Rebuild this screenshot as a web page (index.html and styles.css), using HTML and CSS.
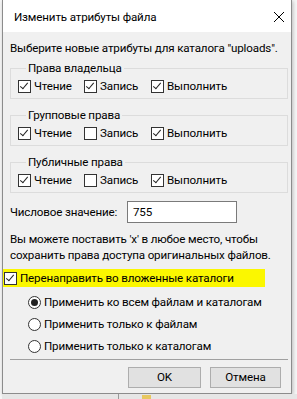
FILE: index.html
```html
<!DOCTYPE html>
<html lang="ru">
<head>
    <meta charset="UTF-8">
    <title>Изменить атрибуты файла</title>
    <link rel="stylesheet" href="styles.css">
</head>
<body>

    <div class="desk">
        <div class="dialog">
            <div class="titlebar">
                <span class="title">Изменить атрибуты файла</span>
                <svg class="close" width="12" height="12" viewBox="0 0 12 12">
                    <path d="M1 1 L11 11 M11 1 L1 11" stroke="#000" stroke-width="1" fill="none"/>
                </svg>
            </div>

            <div class="content">
                <p class="intro">Выберите новые атрибуты для каталога "uploads".</p>

                <fieldset class="group">
                    <legend>Права владельца</legend>
                    <div class="row">
                        <span class="check on"></span><span class="lbl w1">Чтение</span>
                        <span class="check on"></span><span class="lbl w2">Запись</span>
                        <span class="check on"></span><span class="lbl">Выполнить</span>
                    </div>
                </fieldset>

                <fieldset class="group">
                    <legend>Групповые права</legend>
                    <div class="row">
                        <span class="check on"></span><span class="lbl w1">Чтение</span>
                        <span class="check"></span><span class="lbl w2">Запись</span>
                        <span class="check on"></span><span class="lbl">Выполнить</span>
                    </div>
                </fieldset>

                <fieldset class="group">
                    <legend>Публичные права</legend>
                    <div class="row">
                        <span class="check on"></span><span class="lbl w1">Чтение</span>
                        <span class="check"></span><span class="lbl w2">Запись</span>
                        <span class="check on"></span><span class="lbl">Выполнить</span>
                    </div>
                </fieldset>

                <div class="numeric">
                    <span class="num-label">Числовое значение:</span>
                    <div class="textbox">755</div>
                </div>

                <p class="hint">Вы можете поставить 'x' в любое место, чтобы<br>сохранить права доступа оригинальных файлов.</p>
            </div>

            <div class="recurse">
                <span class="check on"></span><span class="lbl">Перенаправить во вложенные каталоги</span>
            </div>

            <div class="radios">
                <div class="radio-row"><span class="radio on"></span><span class="lbl">Применить ко всем файлам и каталогам</span></div>
                <div class="radio-row"><span class="radio"></span><span class="lbl">Применить только к файлам</span></div>
                <div class="radio-row"><span class="radio"></span><span class="lbl">Применить только к каталогам</span></div>
            </div>

            <div class="separator"></div>

            <div class="buttons">
                <div class="btn ok">OK</div>
                <div class="btn cancel">Отмена</div>
            </div>
        </div>

        <div class="behind">
            <span class="behind-line"></span>
            <span class="folder"></span>
        </div>
    </div>

</body>
</html>
```

FILE: styles.css
```css
body {
    margin: 0;
    font-family: Roboto, Arial, sans-serif;
    font-size: 11.6px;
    letter-spacing: -0.15px;
    color: #000;
    background: #f7f7f7;
}
.desk {
    width: 297px;
    height: 399px;
    overflow: hidden;
    padding-left: 2px;
    box-sizing: border-box;
}
.dialog {
    width: 290px;
    height: 394px;
    box-sizing: border-box;
    background: #f0f0f0;
    border: 1px solid #8c8c8c;
    border-top: none;
    box-shadow: 1px 1px 4px rgba(0, 0, 0, 0.25);
    overflow: hidden;
}
.titlebar {
    height: 32px;
    background: #fff;
    display: flex;
    align-items: center;
    justify-content: space-between;
    padding: 0 6px 0 11px;
}
.title {
    line-height: 16px;
    padding-top: 2px;
}
.close {
    margin-top: 2px;
}
.content {
    padding: 0 3px 0 7px;
}
.intro {
    margin: 8px 0 4px;
    line-height: 16px;
    white-space: nowrap;
}
.group {
    margin: 0 0 8px;
    padding: 2px 0 4px 7px;
    border: 1px solid #dcdcdc;
    min-width: 0;
}
.group legend {
    margin-left: 8px;
    padding: 0 2px;
    line-height: 16px;
}
.row {
    display: flex;
    align-items: center;
    height: 16px;
}
.check {
    width: 13px;
    height: 13px;
    box-sizing: border-box;
    border: 1px solid #333;
    background: #fff;
    flex: none;
    position: relative;
}
.check.on::after {
    content: "";
    position: absolute;
    left: 3px;
    top: 0px;
    width: 3px;
    height: 7px;
    border-right: 1px solid #222;
    border-bottom: 1px solid #222;
    transform: rotate(40deg);
}
.lbl {
    margin-left: 3px;
    line-height: 16px;
    white-space: nowrap;
}
.w1 {
    width: 50px;
}
.w2 {
    width: 51px;
}
.numeric {
    display: flex;
    align-items: center;
    height: 22px;
}
.num-label {
    width: 117px;
    white-space: nowrap;
}
.textbox {
    width: 110px;
    height: 22px;
    box-sizing: border-box;
    border: 1px solid #7a7a7a;
    background: #fff;
    padding-left: 5px;
    line-height: 20px;
}
.hint {
    margin: 8px 0 6px;
    line-height: 16px;
    white-space: nowrap;
}
.recurse {
    display: flex;
    align-items: center;
    width: 261px;
    height: 18px;
    margin-top: 1px;
    background: #fbf700;
    padding-left: 1px;
}
.radios {
    padding-left: 25px;
    padding-top: 4px;
}
.radio-row {
    display: flex;
    align-items: center;
    height: 22px;
}
.radio {
    width: 13px;
    height: 13px;
    box-sizing: border-box;
    border: 1px solid #333;
    border-radius: 50%;
    background: #fff;
    flex: none;
    position: relative;
}
.radio.on::after {
    content: "";
    position: absolute;
    left: 2px;
    top: 2px;
    width: 7px;
    height: 7px;
    border-radius: 50%;
    background: #222;
}
.separator {
    margin: 2px 3px 0 7px;
    border-top: 1px solid #a0a0a0;
}
.buttons {
    display: flex;
    justify-content: flex-end;
    gap: 9px;
    padding: 7px 10px 0 0;
}
.btn {
    height: 21px;
    box-sizing: border-box;
    border: 1px solid #adadad;
    background: #e1e1e1;
    text-align: center;
    line-height: 19px;
}
.ok {
    width: 73px;
}
.cancel {
    width: 71px;
}
.behind {
    position: relative;
    height: 5px;
    background: #e6e6e6;
}
.behind-line {
    position: absolute;
    left: 116px;
    top: 0;
    width: 1px;
    height: 5px;
    background: #9a9a9a;
}
.folder {
    position: absolute;
    left: 140px;
    top: 1px;
    width: 9px;
    height: 4px;
    background: #e8c860;
}
```
